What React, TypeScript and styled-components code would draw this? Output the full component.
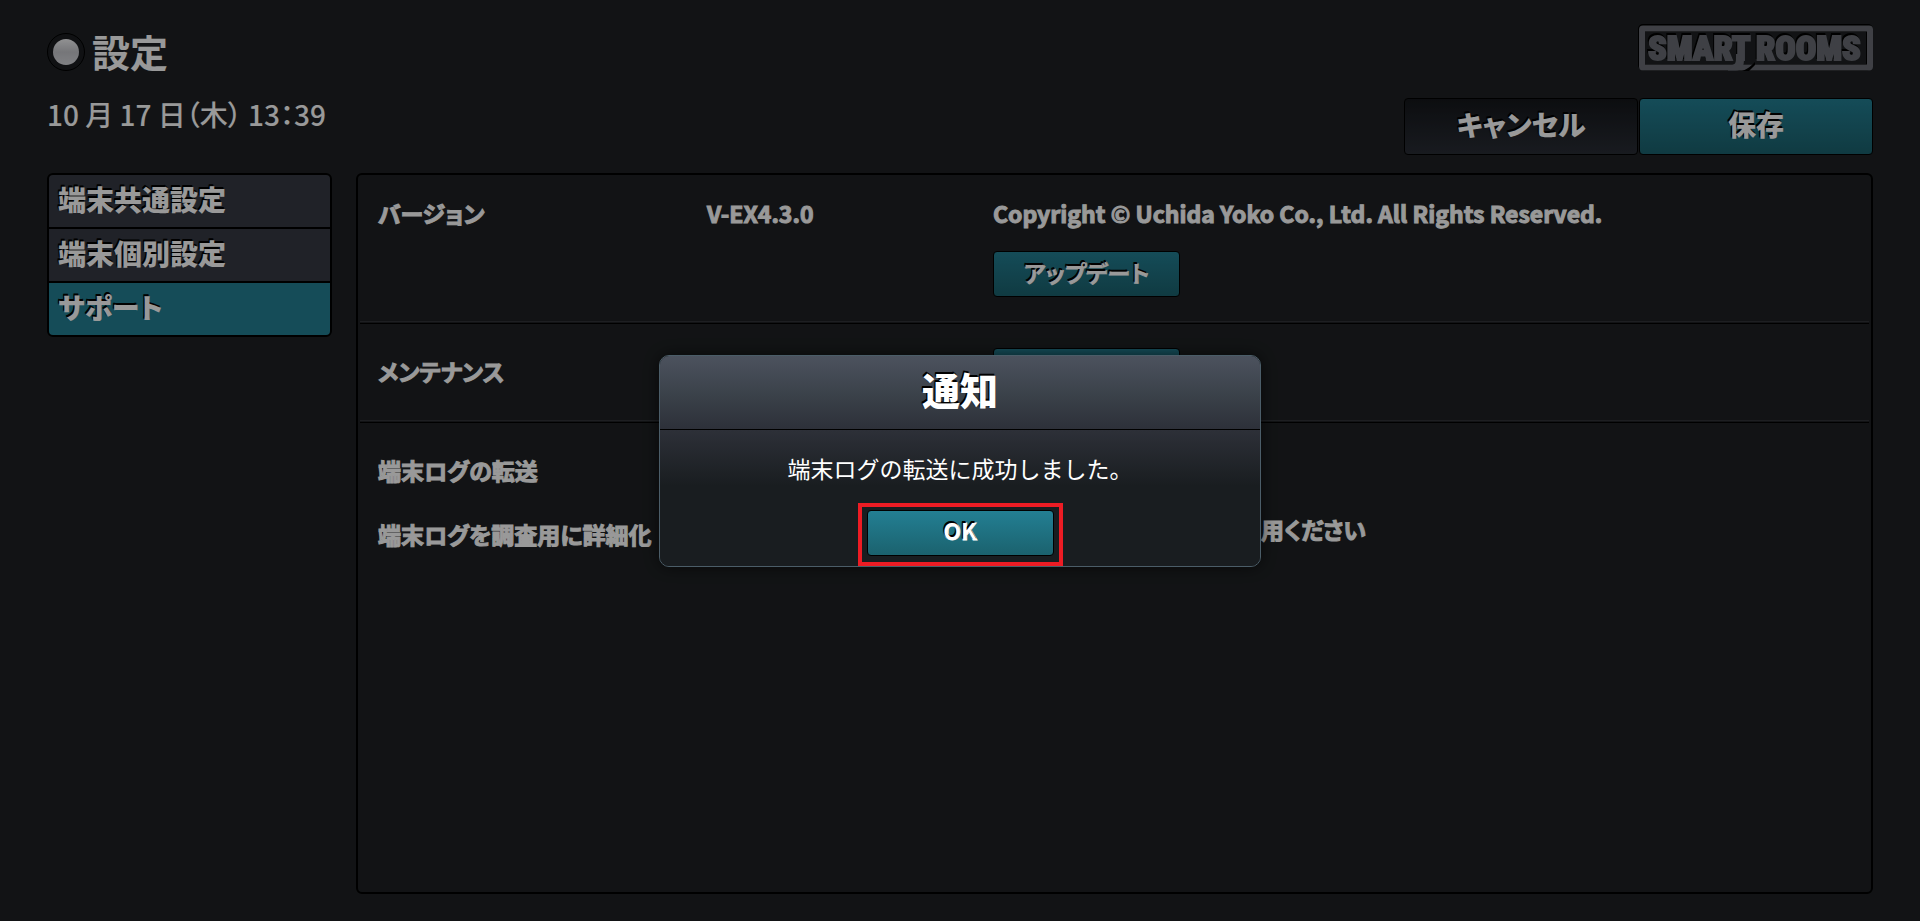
import React from "react";
import styled, { createGlobalStyle, css } from "styled-components";

const GlobalStyle = createGlobalStyle`
  *, *::before, *::after { box-sizing: border-box; }
  body {
    margin: 0;
    background: #1e2123;
    color: #fff;
    font-family: "Noto Sans CJK JP", "Noto Sans", sans-serif;
    font-feature-settings: "palt";
  }
  button { font: inherit; font-feature-settings: inherit; color: inherit; cursor: pointer; }
`;

const Page = styled.div`
  min-height: 100vh;
  display: flex;
  flex-direction: column;
  padding: 24px 47px 27px;
`;

const Header = styled.header`
  display: flex;
  justify-content: space-between;
  height: 149px;
`;

const HeaderLeft = styled.div`
  display: flex;
  flex-direction: column;
  gap: 14px;
`;

const HeaderRight = styled.div`
  display: flex;
  flex-direction: column;
  align-items: flex-end;
  gap: 27px;
`;

const TitleRow = styled.div`
  display: flex;
  align-items: center;
  gap: 7px;
  height: 56px;
`;

const Lamp = styled.span`
  width: 38px;
  height: 38px;
  border: 1px solid #000;
  border-radius: 50%;
  display: grid;
  place-items: center;
  background: #1b1d21;

  &::before {
    content: "";
    width: 26px;
    height: 26px;
    border-radius: 50%;
    background: linear-gradient(#f2f2f4, #c4c5ca 50%, #d6d7dc);
  }
`;

const raisedShadow = css`
  text-shadow: -1px -1px 1px #000, -1px -2px 0 #000;
`;

const Title = styled.h1`
  margin: 0;
  padding-bottom: 3px;
  font-size: 38px;
  line-height: 40px;
  font-weight: 700;
`;

const Clock = styled.time`
  font-size: 28px;
  line-height: 40px;
  font-weight: 500;
`;

const tealFill = css`
  background: linear-gradient(#237f93, #1b626e);
`;

const darkFill = css`
  background: linear-gradient(#15171b, #292d35);
`;

const HeaderButtons = styled.div`
  display: flex;
  gap: 1px;
`;

const HeaderButton = styled.button<{ $primary?: boolean }>`
  width: 234px;
  height: 57px;
  padding: 0 0 5px;
  border: 1px solid #000;
  border-radius: 4px;
  font-size: 28px;
  line-height: 40px;
  font-weight: 900;
  ${raisedShadow}
  ${(p) => (p.$primary ? tealFill : darkFill)}
`;

const Button = styled.button`
  width: 187px;
  height: 46px;
  padding: 0 0 5px;
  border: 1px solid #000;
  border-radius: 4px;
  font-size: 23px;
  line-height: 36px;
  font-weight: 700;
  -webkit-text-stroke: 1px currentColor;
  paint-order: stroke fill;
  ${raisedShadow}
  ${tealFill}
`;

const Body = styled.div`
  flex: 1;
  display: flex;
  align-items: stretch;
  gap: 24px;
`;

const Nav = styled.nav`
  width: 285px;
  flex: none;
  align-self: flex-start;
  display: flex;
  flex-direction: column;
  gap: 2px;
  border: 2px solid #000;
  border-radius: 6px;
  overflow: hidden;
  background: #000;
`;

const NavItem = styled.a<{ $active?: boolean }>`
  height: 52px;
  padding: 4px 9px;
  font-size: 28px;
  line-height: 40px;
  font-weight: 900;
  color: #fff;
  text-decoration: none;
  ${raisedShadow}
  background: ${(p) => (p.$active ? "#237f93" : "#363a43")};
`;

const Panel = styled.main`
  flex: 1;
  min-width: 0;
  border: 2px solid #000;
  border-radius: 6px;
`;

const Section = styled.section`
  display: flex;
  flex-direction: column;
  gap: 18px;
  margin: 0 2px;
  padding: 24px 18px 28px;

  & + & {
    border-top: 1px solid #000;
    box-shadow: 0 -1px 0 #1e2123, 0 -2px 0 #32353a;
  }
`;

const VersionSection = styled(Section)`
  padding: 20px 18px 26px;
`;

const Row = styled.div`
  display: grid;
  grid-template-columns: 329px 286px 1fr;
  font-size: 23px;
  line-height: 36px;
`;

const Label = styled.div<{ $centered?: boolean }>`
  align-self: ${(p) => (p.$centered ? "center" : "start")};
  white-space: nowrap;
  font-weight: 700;
  -webkit-text-stroke: 1px currentColor;
  paint-order: stroke fill;
`;

const Stack = styled.div`
  grid-column: 3;
  display: flex;
  flex-direction: column;
  align-items: flex-start;
  gap: 20px;
`;

const Inline = styled.div`
  grid-column: 3;
  display: flex;
  align-items: flex-start;
  gap: 38px;
`;

const Overlay = styled.div`
  position: fixed;
  inset: 0;
  z-index: 10;
  display: flex;
  align-items: center;
  justify-content: center;
  background: rgba(0, 0, 0, 0.4);
`;

const Dialog = styled.div`
  width: 602px;
  display: flex;
  flex-direction: column;
  align-items: center;
  border: 1px solid #4b5d68;
  border-radius: 10px;
  overflow: hidden;
  background: #191d20;
  box-shadow: 0 0 16px rgba(0, 0, 0, 0.6);
`;

const DialogTitle = styled.h2`
  width: 100%;
  height: 74px;
  margin: 0;
  padding-top: 5px;
  border-bottom: 1px solid #000;
  text-align: center;
  font-size: 38px;
  line-height: 56px;
  font-weight: 900;
  ${raisedShadow}
  background: linear-gradient(#4c525e, #3a4149 55%, #2d3039);
`;

const DialogBody = styled.div`
  width: 100%;
  height: 136px;
  display: flex;
  flex-direction: column;
  align-items: center;
  justify-content: space-between;
  padding-top: 20px;
  background: linear-gradient(#2d3038, #191d20 56px);
`;

const Message = styled.p`
  margin: 0;
  font-size: 23px;
  line-height: 36px;
  font-feature-settings: normal;
`;

const Highlight = styled.div`
  padding: 3px 5px 6px;
  border: 4px solid #ed1c24;
  display: flex;
`;

const LogoSvg = styled.svg`
  font-family: "Roboto Condensed", "Open Sans Condensed", "Noto Sans Condensed", "Liberation Sans Narrow", sans-serif;
  font-weight: 900;
  font-size: 34px;

  .raised { filter: drop-shadow(-1px -2px 0 #000); }
`;

const Logo = () => (
  <LogoSvg width="235" height="47" viewBox="0 0 235 47" role="img" aria-label="SMART ROOMS">
    <rect x="3" y="3" width="229" height="40" rx="2" fill="none" stroke="#000" strokeWidth="6" />
    <rect x="4" y="5" width="227" height="39" rx="2" fill="none" stroke="#000" strokeWidth="6" />
    <rect x="4" y="4.5" width="228" height="39" rx="1" fill="none" stroke="#696c74" strokeWidth="6" />
    <g className="raised" fill="#696c74" stroke="#696c74" strokeWidth="2">
      <text x="10" y="36">SMART</text>
      <text x="118" y="36">ROOMS</text>
    </g>
    <path d="M104 47C110 45 113 42 117 38V41L111 47Z" fill="#000" />
    <path d="M98 30H106V34C106 42 105 46 98 46.500H90V41H93C97 41 98 39 98 34Z" fill="#696c74" />
  </LogoSvg>
);

export default function App() {
  return (
    <>
      <GlobalStyle />
      <Page>
        <Header>
          <HeaderLeft>
            <TitleRow>
              <Lamp />
              <Title>設定</Title>
            </TitleRow>
            <Clock dateTime="10-17T13:39">10 月 17 日（木） 13：39</Clock>
          </HeaderLeft>
          <HeaderRight>
            <Logo />
            <HeaderButtons>
              <HeaderButton type="button">キャンセル</HeaderButton>
              <HeaderButton type="button" $primary>保存</HeaderButton>
            </HeaderButtons>
          </HeaderRight>
        </Header>
        <Body>
          <Nav>
            <NavItem href="#common">端末共通設定</NavItem>
            <NavItem href="#individual">端末個別設定</NavItem>
            <NavItem href="#support" $active>サポート</NavItem>
          </Nav>
          <Panel>
            <VersionSection>
              <Row>
                <Label>バージョン</Label>
                <Label>V-EX4.3.0</Label>
                <Stack>
                  <Label>Copyright © Uchida Yoko Co., Ltd. All Rights Reserved.</Label>
                  <Button type="button">アップデート</Button>
                </Stack>
              </Row>
            </VersionSection>
            <Section>
              <Row>
                <Label $centered>メンテナンス</Label>
                <Inline>
                  <Button type="button">開始</Button>
                </Inline>
              </Row>
            </Section>
            <Section>
              <Row>
                <Label $centered>端末ログの転送</Label>
                <Inline>
                  <Button type="button">転送</Button>
                </Inline>
              </Row>
              <Row>
                <Label $centered>端末ログを調査用に詳細化</Label>
                <Inline>
                  <Button type="button">開始</Button>
                  <Label>ご利用ください</Label>
                </Inline>
              </Row>
            </Section>
          </Panel>
        </Body>
      </Page>
      <Overlay>
        <Dialog role="dialog" aria-modal="true" aria-labelledby="dialog-title">
          <DialogTitle id="dialog-title">通知</DialogTitle>
          <DialogBody>
            <Message>端末ログの転送に成功しました。</Message>
            <Highlight>
              <Button type="button">OK</Button>
            </Highlight>
          </DialogBody>
        </Dialog>
      </Overlay>
    </>
  );
}
